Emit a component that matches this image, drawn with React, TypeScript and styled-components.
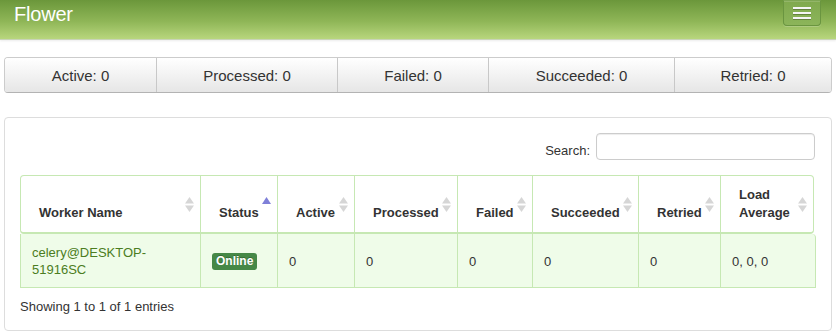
import styled, { createGlobalStyle } from "styled-components";

const GlobalStyle = createGlobalStyle`
  html, body {
    margin: 0;
    padding: 0;
    background: #fff;
    font-family: "Liberation Sans", Arial, sans-serif;
    color: #333;
  }
`;

const Navbar = styled.header`
  height: 39px;
  display: flex;
  justify-content: space-between;
  align-items: flex-start;
  padding: 0 15px 0 14px;
  background: linear-gradient(to bottom, #6b973b 0%, #8fb657 55%, #b8d67d 100%);
  border-bottom: 1px solid #c9d4b8;
  box-shadow: 0 1px 2px rgba(0, 0, 0, 0.08);
`;

const Brand = styled.div`
  margin-top: 4px;
  font-size: 20px;
  line-height: 20px;
  color: #fff;
  letter-spacing: -0.2px;
`;

const NavToggle = styled.button`
  width: 38px;
  height: 26px;
  margin: 0;
  padding: 6px 9px 0;
  display: flex;
  flex-direction: column;
  gap: 3px;
  border: 1px solid #6a9540;
  border-top-color: #7ea653;
  border-radius: 0 0 4px 4px;
  background: linear-gradient(to bottom, #80a94e, #8cb55a);
  box-shadow: inset 0 1px 0 rgba(255, 255, 255, 0.15), 0 1px 0 rgba(255, 255, 255, 0.2);
`;

const Bar = styled.span`
  display: block;
  width: 18px;
  height: 2px;
  background: #f5f5f5;
  box-shadow: 0 1px 0 rgba(0, 0, 0, 0.25);
`;

const Stats = styled.div`
  margin: 17px 4px 0;
  display: grid;
  grid-template-columns: 151px 181px 151px 186px 1fr;
  border: 1px solid #ccc;
  border-bottom-color: #b3b3b3;
  border-radius: 4px;
  overflow: hidden;
`;

const StatCell = styled.div`
  height: 34px;
  display: flex;
  align-items: center;
  justify-content: center;
  font-size: 15px;
  color: #333;
  background: linear-gradient(to bottom, #ffffff, #e6e6e6);
  & + & {
    border-left: 1px solid #c8c8c8;
  }
`;

const Panel = styled.section`
  margin: 24px 4px 0;
  height: 182px;
  padding: 15px 16px 15px 15px;
  border: 1px solid #ddd;
  border-radius: 4px;
`;

const SearchRow = styled.div`
  display: flex;
  justify-content: flex-end;
  align-items: center;
  gap: 6px;
  font-size: 13px;
  margin-bottom: 15px;
`;

const SearchLabel = styled.label`
  padding-top: 7px;
`;

const SearchInput = styled.input`
  width: 219px;
  height: 27px;
  box-sizing: border-box;
  border: 1px solid #ccc;
  border-radius: 4px;
  box-shadow: inset 0 1px 1px rgba(0, 0, 0, 0.075);
  outline: none;
`;

const GREEN_LINE = "#c6e8b3";

const HeadTable = styled.table`
  width: 794px;
  table-layout: fixed;
  border-collapse: separate;
  border-spacing: 0;
  border: 1px solid ${GREEN_LINE};
  border-bottom-width: 2px;
  border-radius: 4px;
`;

const Th = styled.th`
  position: relative;
  padding: 10px 22px 10px 18px;
  vertical-align: bottom;
  text-align: left;
  font-size: 13px;
  line-height: 18px;
  font-weight: bold;
  color: #333;
  & + & {
    border-left: 1px solid ${GREEN_LINE};
  }
`;

const SortIcon = styled.svg`
  position: absolute;
  right: 6px;
  top: 21px;
`;

const BodyTable = styled.table`
  width: 796px;
  table-layout: fixed;
  border-collapse: separate;
  border-spacing: 0;
  border: 1px solid ${GREEN_LINE};
  border-top: none;
  border-radius: 0 4px 0 0;
  background: #effce9;
`;

const Td = styled.td<{ $success?: boolean }>`
  padding: 10px 11px 9px;
  vertical-align: middle;
  font-size: 13px;
  line-height: 17px;
  color: ${(p) => (p.$success ? "#4b7d22" : "#333")};
  & + & {
    border-left: 1px solid ${GREEN_LINE};
  }
`;

const Badge = styled.span`
  display: inline-block;
  padding: 2px 4px;
  font-size: 12px;
  line-height: 13px;
  font-weight: bold;
  color: #fff;
  background: #468847;
  border-radius: 3px;
  text-shadow: 0 -1px 0 rgba(0, 0, 0, 0.25);
`;

const Info = styled.div`
  margin-top: 10px;
  font-size: 13px;
  line-height: 18px;
`;

const widths = [179, 77, 77, 103, 75, 106, 82, 93];

const columns: { label: string; sort: "both" | "asc" }[] = [
  { label: "Worker Name", sort: "both" },
  { label: "Status", sort: "asc" },
  { label: "Active", sort: "both" },
  { label: "Processed", sort: "both" },
  { label: "Failed", sort: "both" },
  { label: "Succeeded", sort: "both" },
  { label: "Retried", sort: "both" },
  { label: "Load Average", sort: "both" },
];

const Sort = ({ kind }: { kind: "both" | "asc" }) => (
  <SortIcon width="9" height="15" viewBox="0 0 9 15">
    {kind === "asc" ? (
      <polygon points="0,7 4.5,0 9,7" fill="#7f80d8" />
    ) : (
      <>
        <polygon points="0,6.5 4.5,0 9,6.5" fill="#d6d6d6" />
        <polygon points="0,8.5 4.5,15 9,8.5" fill="#d6d6d6" />
      </>
    )}
  </SortIcon>
);

const Cols = () => (
  <colgroup>
    {widths.map((w, i) => (
      <col key={i} style={i < widths.length - 1 ? { width: w } : undefined} />
    ))}
  </colgroup>
);

export default function App() {
  const stats = ["Active: 0", "Processed: 0", "Failed: 0", "Succeeded: 0", "Retried: 0"];
  return (
    <>
      <GlobalStyle />
      <Navbar>
        <Brand>Flower</Brand>
        <NavToggle aria-label="menu">
          <Bar />
          <Bar />
          <Bar />
        </NavToggle>
      </Navbar>
      <Stats>
        {stats.map((s) => (
          <StatCell key={s}>{s}</StatCell>
        ))}
      </Stats>
      <Panel>
        <SearchRow>
          <SearchLabel>Search:</SearchLabel>
          <SearchInput type="search" />
        </SearchRow>
        <HeadTable>
          <Cols />
          <thead>
            <tr>
              {columns.map((c) => (
                <Th key={c.label}>
                  {c.label}
                  <Sort kind={c.sort} />
                </Th>
              ))}
            </tr>
          </thead>
        </HeadTable>
        <BodyTable>
          <Cols />
          <tbody>
            <tr>
              <Td $success>celery@DESKTOP-51916SC</Td>
              <Td>
                <Badge>Online</Badge>
              </Td>
              <Td>0</Td>
              <Td>0</Td>
              <Td>0</Td>
              <Td>0</Td>
              <Td>0</Td>
              <Td>0, 0, 0</Td>
            </tr>
          </tbody>
        </BodyTable>
        <Info>Showing 1 to 1 of 1 entries</Info>
      </Panel>
    </>
  );
}
